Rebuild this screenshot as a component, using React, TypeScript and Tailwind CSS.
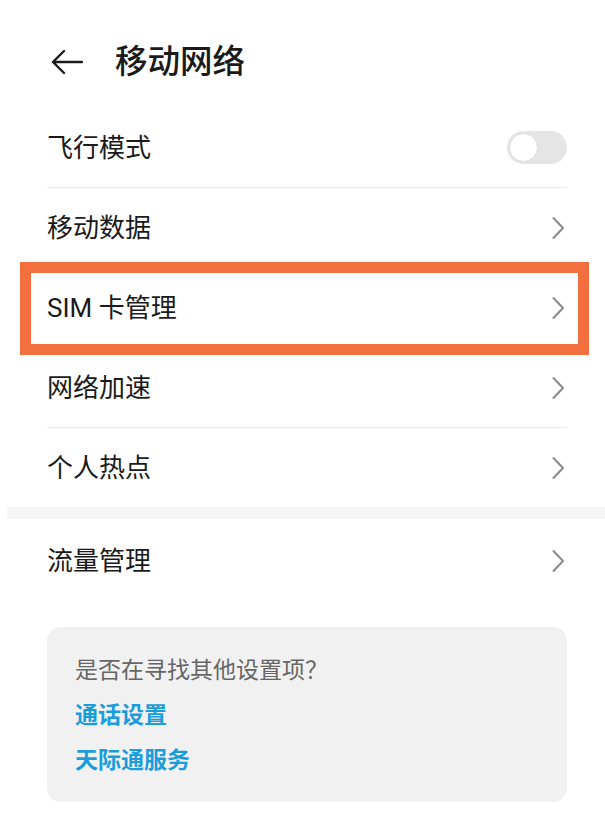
import React from "react";

const font = { fontFamily: 'Roboto, "Noto Sans CJK SC", "Noto Sans", sans-serif' };

function Chevron() {
  return (
    <svg width="14" height="24" viewBox="0 0 14 24" fill="none" className="mr-[2px]">
      <path d="M2.5 2 L12 12 L2.5 22" stroke="#8a8a8a" strokeWidth="2" strokeLinecap="round" strokeLinejoin="round" />
    </svg>
  );
}

function Toggle() {
  return (
    <div className="w-[60px] h-[33px] rounded-full bg-[#e5e5e5] flex items-center px-[2px]">
      <div className="w-[29px] h-[29px] rounded-full bg-white border border-[#dcdcdc]" />
    </div>
  );
}

type Row = { label: string; toggle?: boolean };

const rows: Row[] = [
  { label: "飞行模式", toggle: true },
  { label: "移动数据" },
  { label: "SIM 卡管理" },
  { label: "网络加速" },
  { label: "个人热点" },
];

export default function App() {
  return (
    <div className="w-[605px] min-h-[822px] bg-white text-[#1a1a1a] relative" style={font}>
      <header className="h-[108px] pt-[16px] flex items-center pl-[51px]">
        <svg width="32" height="32" viewBox="0 0 32 32" fill="none">
          <path d="M31 16H2 M13 5 L2 16 L13 27" stroke="#1a1a1a" strokeWidth="2.4" strokeLinecap="round" strokeLinejoin="round" />
        </svg>
        <h1 className="ml-[32px] text-[32.5px] font-medium leading-none">移动网络</h1>
      </header>

      <div className="relative">
        <div className="pl-[47px] pr-[38px]">
          {rows.map((r, i) => (
            <div
              key={r.label}
              className={
                i < rows.length - 1
                  ? "h-[80px] flex items-center justify-between border-b border-[#e8e8e8]"
                  : "h-[79px] flex items-center justify-between"
              }
            >
              <span className="text-[26px] leading-none">{r.label}</span>
              {r.toggle ? <Toggle /> : <Chevron />}
            </div>
          ))}
        </div>
        {/* highlight box */}
        <div className="absolute left-[20px] top-[154px] w-[569px] h-[93px] border-[11px] border-[#f46f3e] pointer-events-none" />
      </div>

      <div className="h-[12px] ml-[7px] bg-[#f6f6f6]" />

      <div className="pl-[47px] pr-[38px]">
        <div className="h-[84px] flex items-center justify-between">
          <span className="text-[26px] leading-none">流量管理</span>
          <Chevron />
        </div>
      </div>

      <div className="mt-[24px] ml-[47px] mr-[38px] rounded-[14px] bg-[#f1f1f1] pt-[21px] pb-[19px] px-[28px]">
        <p className="text-[23px] leading-[45px] text-[#666666]">是否在寻找其他设置项？</p>
        <p className="text-[23px] leading-[45px] text-[#1b9ddb] font-semibold">通话设置</p>
        <p className="text-[23px] leading-[45px] text-[#1b9ddb] font-semibold">天际通服务</p>
      </div>
    </div>
  );
}
